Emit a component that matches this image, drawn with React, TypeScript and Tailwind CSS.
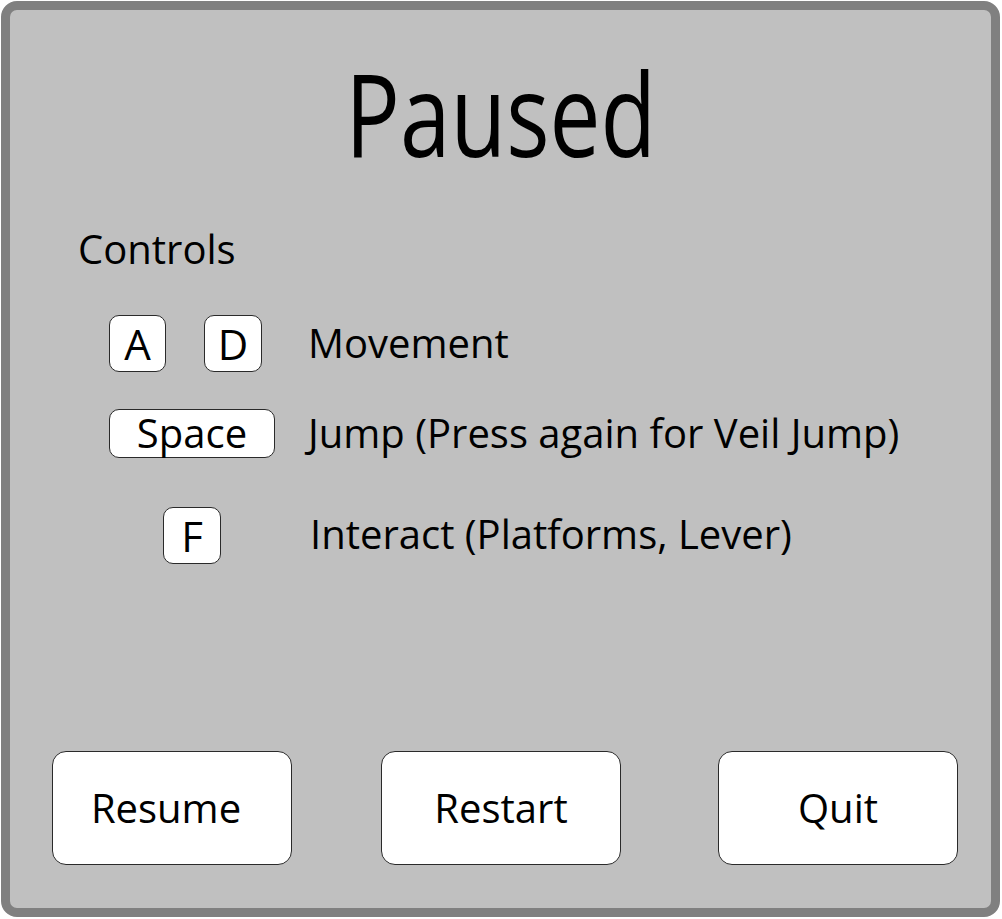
const KEY =
  "flex items-center justify-center bg-white border border-[#2a2a2a] rounded-[10px] text-black";

function Key({ label, className }: { label: string; className: string }) {
  return <div className={`${KEY} ${className}`}>{label}</div>;
}

const BUTTON =
  "flex items-center justify-center w-[240px] h-[114px] bg-white border border-[#2a2a2a] rounded-[14px] text-[40px] text-black";

export default function App() {
  return (
    <div
      className="w-[1002px] h-[919px] bg-white pt-[1px] pl-[1px]"
      style={{ fontFamily: '"Open Sans", "Noto Sans", sans-serif' }}
    >
      <div className="w-[999px] h-[916px] border-[9px] border-[#808080] rounded-[16px] bg-[#c0c0c0] flex flex-col">
        {/* Title */}
        <div className="flex justify-center mt-[45px] h-[130px]">
          <h1 className="inline-block text-[115px] leading-none text-black scale-x-[0.79]">
            Paused
          </h1>
        </div>

        {/* Controls */}
        <div className="pl-[68px] mt-[44px] text-[40px] leading-none text-black">
          Controls
        </div>

        <div className="flex flex-col pl-[99px] mt-[46px] text-[40px] leading-none text-black">
          <div className="flex items-center h-[57px]">
            <div className="flex w-[199px] gap-[38px]">
              <Key label="A" className="w-[57px] h-[57px] text-[42px]" />
              <Key label="D" className="w-[58px] h-[57px] text-[42px]" />
            </div>
            <span className="-mt-[2px]">Movement</span>
          </div>

          <div className="flex items-center h-[49px] mt-[37px]">
            <div className="w-[199px]">
              <Key label="Space" className="w-[166px] h-[49px] text-[40px] pb-[2px]" />
            </div>
            <span className="-mt-[2px]">Jump (Press again for Veil Jump)</span>
          </div>

          <div className="flex items-center h-[57px] mt-[49px]">
            <div className="w-[201px] pl-[54px]">
              <Key label="F" className="w-[58px] h-[57px] text-[42px]" />
            </div>
            <span className="-mt-[4px]">Interact (Platforms, Lever)</span>
          </div>
        </div>

        {/* Buttons */}
        <div className="flex mt-auto mb-[43px] pl-[42px]">
          <button type="button" className={`${BUTTON} pr-[12px]`}>
            Resume
          </button>
          <button type="button" className={`${BUTTON} ml-[89px]`}>
            Restart
          </button>
          <button type="button" className={`${BUTTON} ml-[97px]`}>
            Quit
          </button>
        </div>
      </div>
    </div>
  );
}
